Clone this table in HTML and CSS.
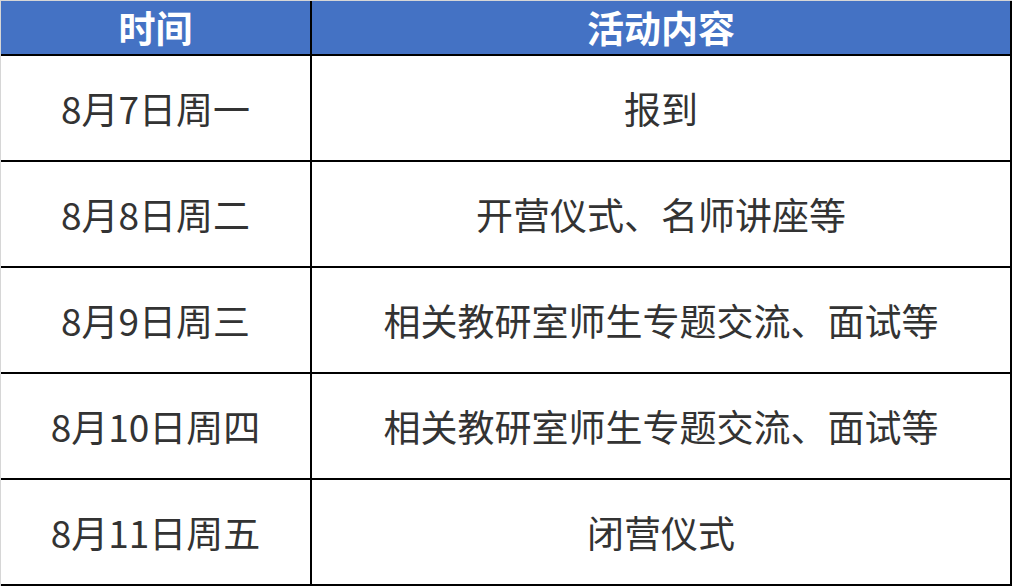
FILE: index.html
```html
<!DOCTYPE html>
<html lang="zh-CN">
<head>
<meta charset="utf-8">
<title>活动安排</title>
<link rel="stylesheet" href="styles.css">
</head>
<body>
<div class="schedule">
  <div class="cell head">时间</div>
  <div class="cell head">活动内容</div>
  <div class="cell">8月7日周一</div>
  <div class="cell">报到</div>
  <div class="cell">8月8日周二</div>
  <div class="cell">开营仪式、名师讲座等</div>
  <div class="cell">8月9日周三</div>
  <div class="cell">相关教研室师生专题交流、面试等</div>
  <div class="cell">8月10日周四</div>
  <div class="cell">相关教研室师生专题交流、面试等</div>
  <div class="cell">8月11日周五</div>
  <div class="cell">闭营仪式</div>
</div>
</body>
</html>
```

FILE: styles.css
```css
html, body {
  margin: 0;
  padding: 0;
  background: #ffffff;
}

.schedule {
  width: 1012px;
  height: 586px;
  box-sizing: border-box;
  border-top: 1px solid #d6d6d6;
  border-left: 1px solid #d6d6d6;
  display: grid;
  grid-template-columns: 311px 700px;
  grid-template-rows: 55px repeat(5, 106px);
  font-family: "Noto Sans CJK SC", "Microsoft YaHei", sans-serif;
  font-size: 37px;
  color: #333333;
}

.cell {
  box-sizing: border-box;
  border-right: 2px solid #000000;
  border-bottom: 2px solid #000000;
  display: flex;
  align-items: center;
  justify-content: center;
  white-space: nowrap;
  line-height: 1;
}

.head {
  background: #4472c4;
  color: #ffffff;
  font-weight: 700;
}
```
